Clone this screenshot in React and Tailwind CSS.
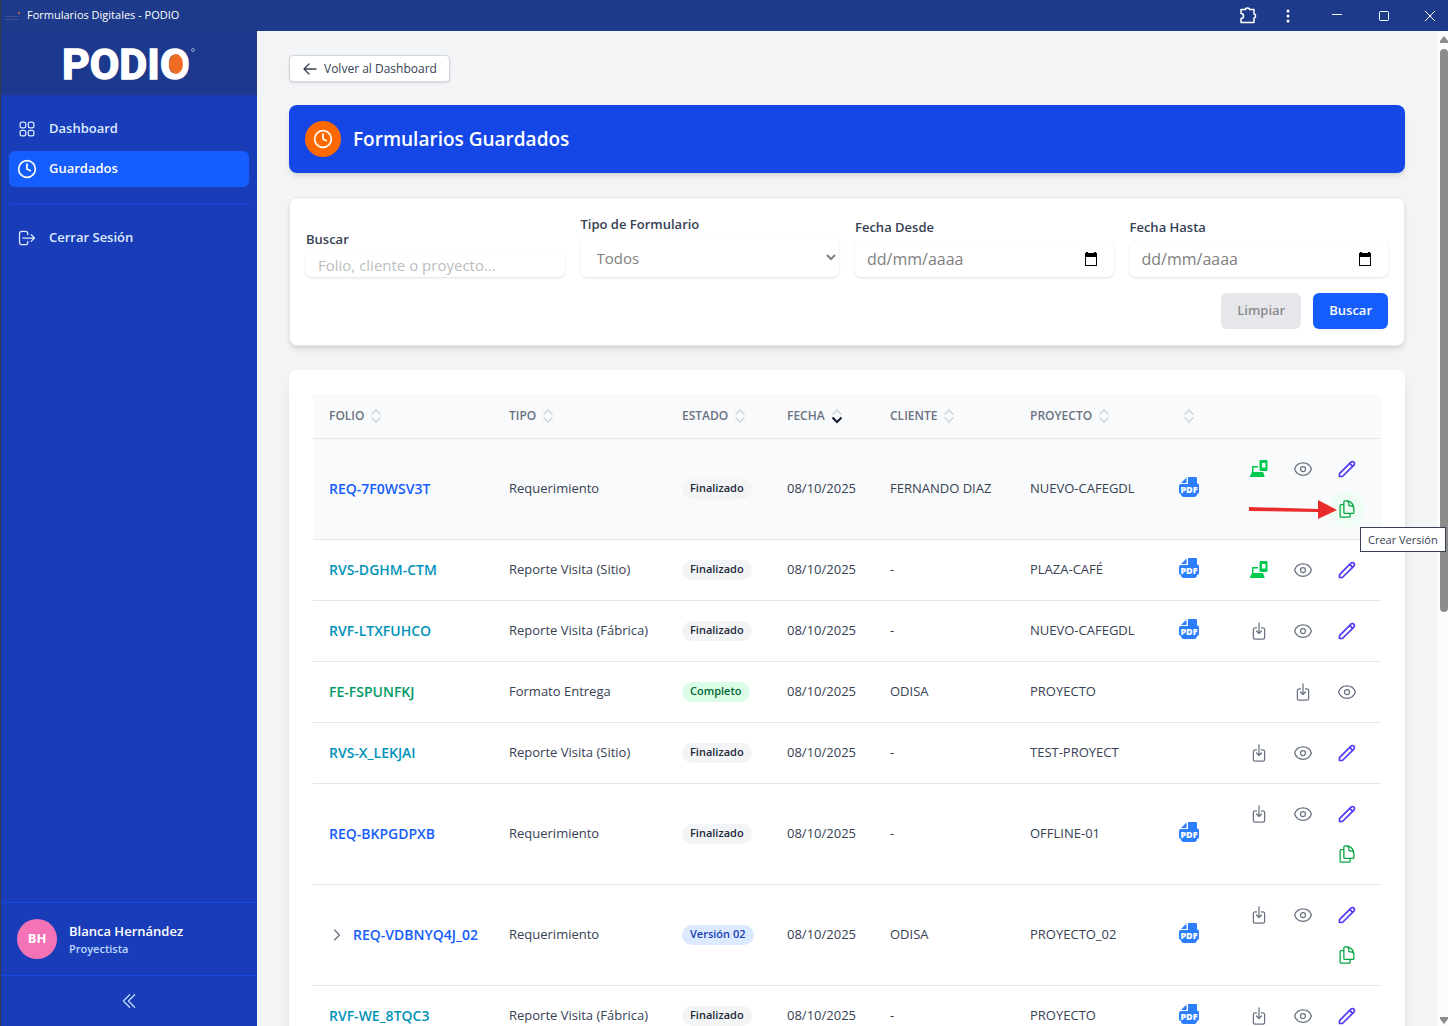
import clsx from 'clsx';
import { Clock } from 'lucide-react';
import { HiOutlineLogout, HiOutlinePencil } from 'react-icons/hi';
import {
  HiOutlineArrowDownOnSquare,
  HiOutlineArrowLeft,
  HiOutlineChevronDoubleLeft,
  HiOutlineChevronRight,
  HiOutlineDocumentDuplicate,
  HiOutlineEye,
  HiOutlineSquares2X2
} from 'react-icons/hi2';

const folioColors = {
  REQ: 'text-blue-600',
  RVS: 'text-cyan-600',
  RVF: 'text-cyan-600',
  FE: 'text-emerald-600'
};

const statusColors = {
  Finalizado: 'bg-gray-100 text-gray-800',
  Completo: 'bg-green-100 text-green-800',
  'Versión 02': 'bg-blue-100 text-blue-800'
};

const columns = [
  { label: 'FOLIO', width: 'w-[180px]' },
  { label: 'TIPO', width: 'w-[173px]' },
  { label: 'ESTADO', width: 'w-[105px]' },
  { label: 'FECHA', width: 'w-[103px]', sorted: true },
  { label: 'CLIENTE', width: 'w-[140px]' },
  { label: 'PROYECTO', width: 'w-[144px]' },
  { label: '', width: 'w-[62px]' }
];

const forms = [
  { folio: 'REQ-7F0WSV3T', tipo: 'Requerimiento', estado: 'Finalizado', cliente: 'FERNANDO DIAZ', proyecto: 'NUEVO-CAFEGDL', pdf: true, actions: ['synced', 'view', 'edit', 'version'], active: true },
  { folio: 'RVS-DGHM-CTM', tipo: 'Reporte Visita (Sitio)', estado: 'Finalizado', cliente: '-', proyecto: 'PLAZA-CAFÉ', pdf: true, actions: ['synced', 'view', 'edit'] },
  { folio: 'RVF-LTXFUHCO', tipo: 'Reporte Visita (Fábrica)', estado: 'Finalizado', cliente: '-', proyecto: 'NUEVO-CAFEGDL', pdf: true, actions: ['download', 'view', 'edit'] },
  { folio: 'FE-FSPUNFKJ', tipo: 'Formato Entrega', estado: 'Completo', cliente: 'ODISA', proyecto: 'PROYECTO', pdf: false, actions: ['download', 'view'] },
  { folio: 'RVS-X_LEKJAI', tipo: 'Reporte Visita (Sitio)', estado: 'Finalizado', cliente: '-', proyecto: 'TEST-PROYECT', pdf: false, actions: ['download', 'view', 'edit'] },
  { folio: 'REQ-BKPGDPXB', tipo: 'Requerimiento', estado: 'Finalizado', cliente: '-', proyecto: 'OFFLINE-01', pdf: true, actions: ['download', 'view', 'edit', 'version'] },
  { folio: 'REQ-VDBNYQ4J_02', tipo: 'Requerimiento', estado: 'Versión 02', cliente: 'ODISA', proyecto: 'PROYECTO_02', pdf: true, actions: ['download', 'view', 'edit', 'version'], expandable: true },
  { folio: 'RVF-WE_8TQC3', tipo: 'Reporte Visita (Fábrica)', estado: 'Finalizado', cliente: '-', proyecto: 'PROYECTO', pdf: true, actions: ['download', 'view', 'edit'] }
];

const PodioLogo = () => (
  <svg viewBox="-2 -10 138 60" className="w-[138px] h-[60px]" role="img" aria-label="PODIO">
    <text x="0" y="36" fontFamily="Roboto, sans-serif" fontWeight="700" fontSize="43" fill="#fff" stroke="#fff" strokeWidth="1.500">PODIO</text>
    <ellipse cx="114" cy="21" rx="7" ry="10" fill="#ee6c23" />
    <circle cx="131" cy="7" r="1.500" fill="none" stroke="#8ea0d0" strokeWidth="1" />
  </svg>
);

const PdfIcon = () => (
  <svg viewBox="0 0 20 20" className="size-5">
    <path d="M7.500 .5V6H2z" fill="#2b7fff" />
    <path d="M9 0h8a1 1 0 0 1 1 1v5.500a2 2 0 0 1 2 2V15a2 2 0 0 1-2 2 3 3 0 0 1-3 3H5a3 3 0 0 1-3-3 2 2 0 0 1-2-2V9a2 2 0 0 1 2-2h7z" fill="#2b7fff" />
    <text x="10" y="15.500" textAnchor="middle" fontFamily="'Open Sans', sans-serif" fontWeight="800" fontSize="9" fill="#fff">PDF</text>
  </svg>
);

const SyncedIcon = () => (
  <svg viewBox="0 0 20 20" className="size-5" fill="#00c950">
    <path fillRule="evenodd" d="M11.500 1h6a1 1 0 0 1 1 1v9a1 1 0 0 1-1 1h-6a1 1 0 0 1-1-1V2a1 1 0 0 1 1-1zM13 4v4.500h3.500V4z" />
    <path d="M3 7h6v1.500H4.500V13H14l1.500 4v1H1v-1l2-4z" />
  </svg>
);

const SortIcon = ({ sorted }) => (
  <svg viewBox="0 0 12 16" className="w-3 h-4" fill="none" strokeWidth="1.500">
    <path d="M1.500 6.500L6 2l4.500 4.500" stroke="#d1d5dc" />
    <path d="M1.500 9.500L6 14l4.500-4.500" stroke={sorted ? '#101828' : '#d1d5dc'} strokeWidth={sorted ? 2 : 1.5} />
  </svg>
);

const CalendarIcon = () => (
  <svg viewBox="0 0 14 16" className="w-3.5 h-4">
    <path fillRule="evenodd" d="M2 1h2v1h6V1h2v1h1v13H1V2h1zM2 6v8h10V6z" />
  </svg>
);

const actionItems = {
  synced: { label: 'Sincronizado', icon: <SyncedIcon />, color: '' },
  download: { label: 'Descargar', icon: <HiOutlineArrowDownOnSquare className="size-5" />, color: 'text-gray-500' },
  view: { label: 'Ver', icon: <HiOutlineEye className="size-5" />, color: 'text-gray-500' },
  edit: { label: 'Editar', icon: <HiOutlinePencil className="size-5" />, color: 'text-indigo-600' },
  version: { label: 'Crear Versión', icon: <HiOutlineDocumentDuplicate className="size-5" />, color: 'text-green-600' }
};

const ActionButton = ({ type, highlighted }) => {
  const { label, icon, color } = actionItems[type];
  return (
    <button
      type="button"
      aria-label={label}
      className={clsx('relative size-9 rounded-full flex items-center justify-center', color, highlighted && 'bg-green-50')}
    >
      {icon}
      {highlighted && (
        <>
          <svg viewBox="0 0 88 20" className="absolute right-7 top-2 w-[88px] h-5" fill="#e92b2b">
            <path d="M0 8l69 2V1l19 10-19 9v-7L0 12z" />
          </svg>
          <span className="absolute z-20 top-full left-[31px] border border-gray-700 bg-white px-[7px] h-[25px] leading-[23px] text-[11px] text-gray-700 whitespace-nowrap">
            {label}
          </span>
        </>
      )}
    </button>
  );
};

const TitleBar = () => (
  <div className="h-[31px] shrink-0 bg-[#1e3a8a] text-white flex items-center justify-between pl-1 pr-3">
    <div className="flex items-center gap-1.5 text-[11px]">
      <svg viewBox="0 0 16 12" className="w-4 h-3">
        <path d="M0 6.500h14M0 9.500h14" stroke="#3b4f8f" />
        <circle cx="14" cy="3" r="1" fill="#f26f21" />
      </svg>
      <span>Formularios Digitales - PODIO</span>
    </div>
    <div className="flex items-center">
      <button type="button" aria-label="Extensiones" className="w-10 flex justify-center">
        <svg viewBox="0 0 18 18" className="size-[18px]" fill="none" stroke="#fff" strokeWidth="1.500" strokeLinejoin="round">
          <path d="M2 2.500h4.500a2 1.500 0 0 1 4 0H15v4.500a1.500 2 0 0 1 0 4v4.500H2v-4a2.500 2.500 0 0 0 0-5z" />
        </svg>
      </button>
      <button type="button" aria-label="Más opciones" className="w-10 flex justify-center">
        <svg viewBox="0 0 4 14" className="w-1 h-3.5" fill="#fff">
          <circle cx="2" cy="2" r="1.500" />
          <circle cx="2" cy="7" r="1.500" />
          <circle cx="2" cy="12" r="1.500" />
        </svg>
      </button>
      <button type="button" aria-label="Minimizar" className="w-[58px] flex justify-center">
        <svg viewBox="0 0 10 10" className="size-2.5" stroke="#fff"><path d="M0 3.500h10" /></svg>
      </button>
      <button type="button" aria-label="Maximizar" className="w-9 flex justify-center">
        <svg viewBox="0 0 10 10" className="size-2.5" fill="none" stroke="#fff"><rect x=".5" y=".5" width="9" height="9" rx="1" /></svg>
      </button>
      <button type="button" aria-label="Cerrar" className="pl-[22px]">
        <svg viewBox="0 0 12 12" className="size-3" stroke="#fff"><path d="M1 1l10 10M11 1L1 11" /></svg>
      </button>
    </div>
  </div>
);

const NavItem = ({ icon: Icon, label, active, iconClass }) => (
  <a
    href="#"
    className={clsx(
      'h-9 px-2 rounded-md flex items-center gap-3 text-[13px] font-semibold',
      active ? 'bg-blue-600 text-white' : 'text-blue-100'
    )}
  >
    <Icon className={clsx('size-5', iconClass)} />
    {label}
  </a>
);

const Sidebar = () => (
  <aside className="w-64 shrink-0 bg-blue-800 flex flex-col">
    <div className="h-16 shrink-0 bg-blue-900 flex items-center justify-center">
      <PodioLogo />
    </div>
    <nav className="flex-1 px-2 py-4 flex flex-col gap-1">
      <NavItem icon={HiOutlineSquares2X2} label="Dashboard" />
      <NavItem icon={Clock} label="Guardados" active />
      <div className="mt-3 pt-4 border-t border-blue-700">
        <NavItem icon={HiOutlineLogout} label="Cerrar Sesión" iconClass="[&_path]:stroke-[1.5]" />
      </div>
    </nav>
    <div className="border-t border-blue-700 p-4 flex items-center gap-3">
      <div className="size-10 rounded-full bg-[#f472b6] text-white text-[13px] font-bold flex items-center justify-center">BH</div>
      <div>
        <p className="text-[13px] leading-5 font-semibold text-white">Blanca Hernández</p>
        <p className="text-[11px] leading-4 font-semibold text-blue-200">Proyectista</p>
      </div>
    </div>
    <button type="button" aria-label="Contraer menú" className="border-t border-blue-700 h-[51px] flex items-center justify-center text-blue-200">
      <HiOutlineChevronDoubleLeft className="size-5" />
    </button>
  </aside>
);

const DateField = ({ id, label }) => (
  <div>
    <label htmlFor={id} className="block mb-1 text-[13px] leading-5 font-semibold text-gray-700">{label}</label>
    <div className="h-9 px-3 rounded-md shadow-sm flex items-center">
      <input id={id} type="text" placeholder="dd/mm/aaaa" className="flex-1 min-w-0 text-base placeholder:text-[#808080] outline-none" />
      <button type="button" aria-label={`Abrir calendario: ${label}`} className="px-1"><CalendarIcon /></button>
    </div>
  </div>
);

const Filters = () => (
  <form className="mt-6 bg-white border border-gray-200 rounded-lg shadow-md p-4">
    <div className="grid grid-cols-4 gap-4 items-end">
      <div>
        <label htmlFor="buscar" className="block mb-1 text-[13px] leading-5 font-semibold text-gray-700">Buscar</label>
        <input
          id="buscar"
          type="text"
          placeholder="Folio, cliente o proyecto..."
          className="block w-full h-6 px-3 rounded-md shadow-sm text-[15px] placeholder:text-[#bdbdbd] outline-none"
        />
      </div>
      <div>
        <label htmlFor="tipo" className="block mb-1 text-[13px] leading-5 font-semibold text-gray-700">Tipo de Formulario</label>
        <select id="tipo" className="block w-full h-[39px] pl-3 rounded-md shadow-sm bg-white text-[15px] text-[#808080]">
          <option>Todos</option>
        </select>
      </div>
      <DateField id="desde" label="Fecha Desde" />
      <DateField id="hasta" label="Fecha Hasta" />
    </div>
    <div className="mt-4 flex justify-end gap-3">
      <button type="reset" className="h-9 px-4 rounded-md bg-gray-200 text-[13px] font-semibold text-[#8c8c8c]">Limpiar</button>
      <button type="submit" className="h-9 px-4 rounded-md bg-blue-600 text-[13px] font-semibold text-white">Buscar</button>
    </div>
  </form>
);

const FormsTable = () => (
  <div className="mt-6 bg-white rounded-lg shadow-lg p-6">
    <table className="w-full table-fixed text-left">
      <thead>
        <tr className="h-11 bg-gray-50 border-b border-gray-200">
          {columns.map((column) => (
            <th key={column.label} className={clsx('px-4 text-xs font-semibold text-gray-500', column.width)}>
              <div className={clsx('flex items-center gap-1.5', !column.label && 'justify-center')}>
                {column.label}
                <SortIcon sorted={column.sorted} />
              </div>
            </th>
          ))}
          <th className="w-[161px]" />
        </tr>
      </thead>
      <tbody className="text-[13px] text-gray-700">
        {forms.map((form) => (
          <tr key={form.folio} className={clsx('border-b border-gray-200', form.active && 'bg-gray-50')}>
            <td className="px-4">
              <div className="flex items-center gap-2 whitespace-nowrap">
                {form.expandable && (
                  <button type="button" aria-label="Mostrar versiones" className="w-4 flex justify-center text-gray-500">
                    <HiOutlineChevronRight className="size-4 stroke-2" />
                  </button>
                )}
                <a href="#" className={clsx('text-sm font-semibold', folioColors[form.folio.split('-')[0]])}>{form.folio}</a>
              </div>
            </td>
            <td className="px-4 whitespace-nowrap">{form.tipo}</td>
            <td className="px-4">
              <span className={clsx('inline-flex h-5 items-center rounded-full px-2 text-[11px] font-semibold whitespace-nowrap', statusColors[form.estado])}>
                {form.estado}
              </span>
            </td>
            <td className="px-4">08/10/2025</td>
            <td className="px-4 whitespace-nowrap">{form.cliente}</td>
            <td className="px-4 whitespace-nowrap">{form.proyecto}</td>
            <td>
              {form.pdf && (
                <button type="button" aria-label="Abrir PDF" className="flex mx-auto pb-1"><PdfIcon /></button>
              )}
            </td>
            <td className="px-4 py-3">
              <div className="flex flex-wrap justify-end gap-x-2 gap-y-1">
                {form.actions.map((type) => (
                  <ActionButton key={type} type={type} highlighted={form.active && type === 'version'} />
                ))}
              </div>
            </td>
          </tr>
        ))}
      </tbody>
    </table>
  </div>
);

const Scrollbar = () => (
  <div className="w-[11px] shrink-0 bg-[#fcfcfc] pl-[3px] pt-[5px] pb-0.5 flex flex-col" aria-hidden="true">
    <svg viewBox="0 0 8 7" className="w-2 h-[7px]" fill="#8b8b8b"><path d="M4 0l4 5v2H0V5z" /></svg>
    <div className="mt-1.5 h-[57%] rounded-full bg-[#8b8b8b]" />
    <svg viewBox="0 0 8 7" className="w-2 h-[7px] mt-auto" fill="#8b8b8b"><path d="M4 7l4-5V0H0v2z" /></svg>
  </div>
);

const App = () => (
  <div className="h-screen overflow-hidden flex flex-col border-l border-[#343a46] bg-gray-100 font-['Open_Sans',sans-serif]">
    <TitleBar />
    <div className="flex-1 min-h-0 flex">
      <Sidebar />
      <main className="flex-1 min-w-0 px-8 py-6">
        <button
          type="button"
          className="h-[27px] px-3 flex items-center gap-1.5 rounded-sm border border-gray-300 bg-white shadow-sm text-xs font-medium text-gray-700"
        >
          <HiOutlineArrowLeft className="size-4 stroke-2" />
          Volver al Dashboard
        </button>
        <div className="mt-[23px] h-[68px] px-4 rounded-lg bg-blue-700 shadow-md flex items-center gap-3">
          <div className="size-9 rounded-full bg-[#ff6900] text-white flex items-center justify-center">
            <Clock className="size-5" />
          </div>
          <h1 className="text-[19px] font-semibold text-white">Formularios Guardados</h1>
        </div>
        <Filters />
        <FormsTable />
      </main>
      <Scrollbar />
    </div>
  </div>
);

export default App;
